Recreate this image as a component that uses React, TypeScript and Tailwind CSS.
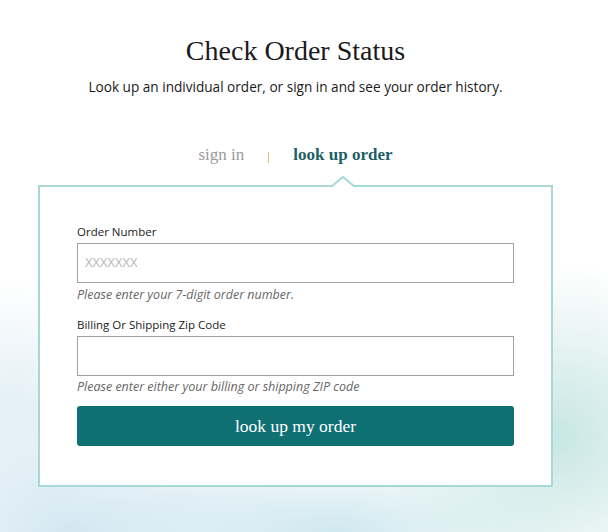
import React from "react";

export default function App() {
  return (
    <div className="relative w-[608px] h-[532px] overflow-hidden bg-white bg-[radial-gradient(ellipse_55%_35%_at_12%_100%,rgba(200,225,238,0.8),transparent_75%),radial-gradient(ellipse_40%_45%_at_92%_82%,rgba(190,226,222,0.85),transparent_72%),radial-gradient(ellipse_55%_22%_at_55%_100%,rgba(198,228,236,0.85),transparent_75%),radial-gradient(ellipse_30%_30%_at_2%_75%,rgba(210,230,240,0.6),transparent_75%)]">
      <div className="w-[591px] flex flex-col items-center pt-[34px]">
        <h1 className="text-[28px] leading-[34px] text-[#1a1a1a] font-['Liberation_Serif',serif]">
          Check Order Status
        </h1>
        <p className="mt-[9px] text-[13.6px] leading-[20px] text-[#1a1a1a] font-['Open_Sans',sans-serif]">
          Look up an individual order, or sign in and see your order history.
        </p>
        <div className="mt-[46px] flex items-center gap-[24px] font-['Liberation_Serif',serif] text-[17px] leading-[24px]">
          <span className="text-[#9a9a9a]">sign in</span>
          <span className="w-[1px] h-[11px] bg-[#e8b97c] mt-[4px]"></span>
          <span className="text-[#1f5f66] font-bold">look up order</span>
        </div>
        <div className="relative mt-[18px] w-[515px] h-[302px] border-2 border-[#a7d8d6] bg-white px-[37px] pt-[37px]">
          <svg
            className="absolute left-[292px] top-[-11px]"
            width="22"
            height="11"
            viewBox="0 0 22 11"
          >
            <polygon points="0,11 11,1 22,11" fill="#ffffff" />
            <polyline points="0,10 11,1 22,10" fill="none" stroke="#a7d8d6" strokeWidth="2" />
          </svg>
          <div className="font-['Open_Sans',sans-serif]">
            <label className="block text-[11.5px] leading-[16px] text-[#222]">Order Number</label>
            <div className="mt-[3px] h-[40px] border border-[#a59e9a] flex items-center px-[7px]">
              <span className="text-[13px] text-[#b8b8b8]">XXXXXXX</span>
            </div>
            <p className="mt-[4px] text-[12.5px] leading-[16px] italic text-[#666]">
              Please enter your 7-digit order number.
            </p>
            <label className="mt-[14px] block text-[11.5px] leading-[16px] text-[#222]">
              Billing Or Shipping Zip Code
            </label>
            <div className="mt-[3px] h-[40px] border border-[#a59e9a]"></div>
            <p className="mt-[3px] text-[12.5px] leading-[16px] italic text-[#666]">
              Please enter either your billing or shipping ZIP code
            </p>
            <button className="mt-[11px] w-full h-[40px] rounded-[3px] bg-[#0e7073] text-white text-[17.5px] font-['Liberation_Serif',serif]">
              look up my order
            </button>
          </div>
        </div>
      </div>
    </div>
  );
}
